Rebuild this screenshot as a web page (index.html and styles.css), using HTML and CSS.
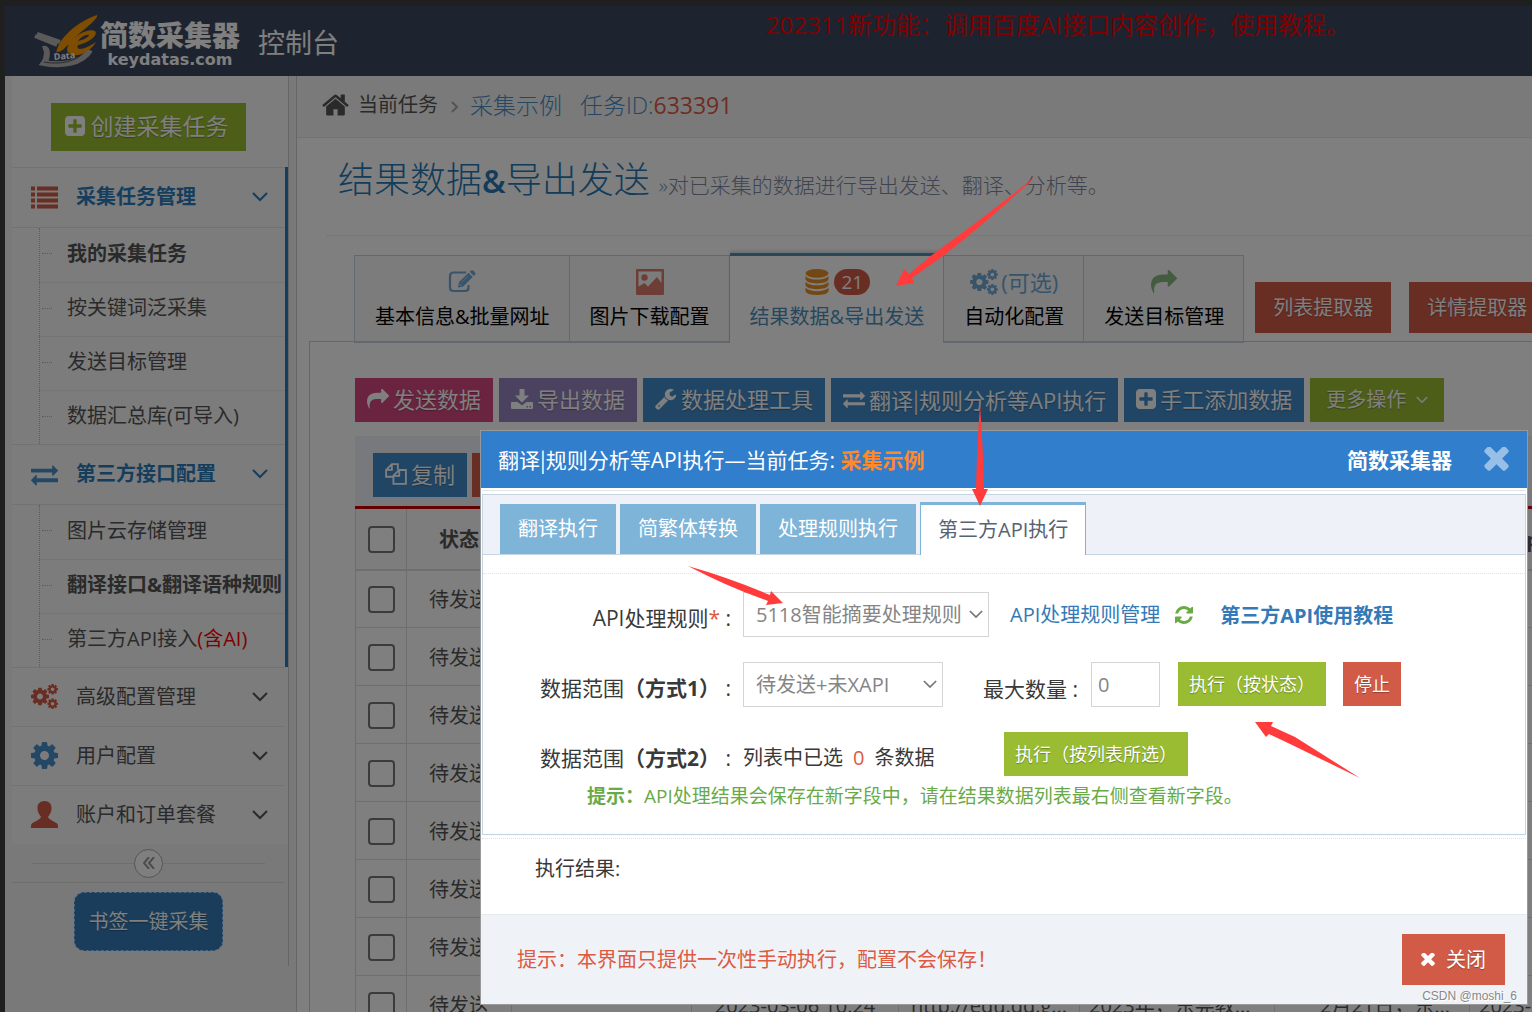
FILE: index.html
```html
<!DOCTYPE html>
<html lang="zh-CN">
<head>
<meta charset="utf-8">
<title>简数采集器 控制台</title>
<link rel="stylesheet" href="styles.css">
</head>
<body>
<svg class="sprite" aria-hidden="true">
  <symbol id="share" viewBox="0 0 1792 1792"><path d="M1792 640q0 26-19 45l-512 512q-19 19-45 19t-45-19-19-45v-256h-224q-98 0-175.500 6t-154 21.500-133 42.500-105.500 69.500-80 101-48.500 138.500-17.500 181q0 55 5 123 0 6 2.500 23.500t2.500 26.500q0 15-8.500 25t-23.500 10q-16 0-28-17-7-9-13-22t-13.500-30-10.500-24q-127-285-127-451 0-199 53-333 162-403 875-403h224v-256q0-26 19-45t45-19 45 19l512 512q19 19 19 45z"/></symbol>
  <symbol id="exchange" viewBox="0 0 1792 1792"><path d="M1792 1184v192q0 13-9.500 22.500t-22.500 9.500h-1376v192q0 13-9.500 22.500t-22.500 9.500q-12 0-24-10l-319-320q-9-9-9-22 0-14 9-23l320-320q9-9 23-9 13 0 22.500 9.500t9.500 22.500v192h1376q13 0 22.500 9.500t9.500 22.500zm0-544q0 14-9 23l-320 320q-9 9-23 9-13 0-22.500-9.500t-9.500-22.500v-192h-1376q-13 0-22.500-9.500t-9.500-22.500v-192q0-13 9.500-22.500t22.500-9.500h1376v-192q0-14 9-23t23-9q12 0 24 10l319 319q9 9 9 23z"/></symbol>
  <symbol id="cog" viewBox="128 128 1536 1536"><path d="M1152 896q0-106-75-181t-181-75-181 75-75 181 75 181 181 75 181-75 75-181zm512-109v222q0 12-8 23t-20 13l-185 28q-19 54-39 91 35 50 107 138 10 12 10 25t-9 23q-27 37-99 108t-94 71q-12 0-26-9l-138-108q-44 23-91 38-16 136-29 186-7 28-36 28h-222q-14 0-24.500-8.500t-11.500-21.500l-28-184q-49-16-90-37l-141 107q-10 9-25 9-14 0-25-11-126-114-165-168-7-10-7-23 0-12 8-23 15-21 51-66.500t54-70.500q-27-50-41-99l-183-27q-13-2-21-12.500t-8-23.500v-222q0-12 8-23t19-13l186-28q14-46 39-92-40-57-107-138-10-12-10-24 0-10 9-23 26-36 98.500-107.500t94.500-71.500q13 0 26 10l138 107q44-23 91-38 16-136 29-186 7-28 36-28h222q14 0 24.500 8.500t11.500 21.500l28 184q49 16 90 37l142-107q9-9 24-9 13 0 25 10 129 119 165 170 7 8 7 22 0 12-8 23-15 21-51 66.500t-54 70.500q26 50 41 98l183 28q13 2 21 12.500t8 23.500z"/></symbol>
  <symbol id="cogs" viewBox="0 0 30 28"><use href="#cog" x="0" y="4" width="20" height="20"/><use href="#cog" x="18" y="0" width="12" height="12"/><use href="#cog" x="18" y="16" width="12" height="12"/></symbol>
  <symbol id="times" viewBox="290 290 1212 1212"><path d="M1490 1190q0 40-28 68l-136 136q-28 28-68 28t-68-28l-294-294-294 294q-28 28-68 28t-68-28l-136-136q-28-28-28-68t28-68l294-294-294-294q-28-28-28-68t28-68l136-136q28-28 68-28t68 28l294 294 294-294q28-28 68-28t68 28l136 136q28 28 28 68t-28 68l-294 294 294 294q28 28 28 68z"/></symbol>
  <symbol id="home" viewBox="64 192 1664 1408"><path d="M1472 992v480q0 26-19 45t-45 19h-384v-384h-256v384h-384q-26 0-45-19t-19-45v-480q0-1 .5-3t.5-3l575-474 575 474q1 2 1 6zm223-69l-62 74q-8 9-21 11h-3q-13 0-21-7l-692-577-692 577q-12 8-24 7-13-2-21-11l-62-74q-8-10-7-23.500t11-21.500l719-599q32-26 76-26t76 26l244 204v-195q0-14 9-23t23-9h192q14 0 23 9t9 23v408l219 182q10 8 11 21.500t-7 23.500z"/></symbol>
  <symbol id="plus" viewBox="128 128 1536 1536"><path d="M1408 960v-128q0-26-19-45t-45-19h-320v-320q0-26-19-45t-45-19h-128q-26 0-45 19t-19 45v320h-320q-26 0-45 19t-19 45v128q0 26 19 45t45 19h320v320q0 26 19 45t45 19h128q26 0 45-19t19-45v-320h320q26 0 45-19t19-45zm256-544v960q0 119-84.500 203.500t-203.500 84.500h-960q-119 0-203.500-84.500t-84.500-203.500v-960q0-119 84.500-203.500t203.500-84.500h960q119 0 203.500 84.500t84.500 203.500z"/></symbol>
  <symbol id="refresh" viewBox="128 128 1536 1536"><path d="M1639 1056q0 5-1 7-64 268-268 434.500t-478 166.500q-146 0-282.500-55t-243.500-157l-129 129q-19 19-45 19t-45-19-19-45v-448q0-26 19-45t45-19h448q26 0 45 19t19 45-19 45l-137 137q71 66 161 102t187 36q134 0 250-65t186-179q11-17 53-117 8-23 30-23h192q13 0 22.500 9.500t9.500 22.500zm25-800v448q0 26-19 45t-45 19h-448q-26 0-45-19t-19-45 19-45l138-138q-148-137-349-137-134 0-250 65t-186 179q-11 17-53 117-8 23-30 23h-199q-13 0-22.500-9.500t-9.500-22.500v-7q65-268 270-434.500t480-166.500q146 0 284 55.500t245 156.500l130-129q19-19 45-19t45 19 19 45z"/></symbol>
  <symbol id="wrench" viewBox="64 64 1728 1728"><path d="M448 1472q0-26-19-45t-45-19-45 19-19 45 19 45 45 19 45-19 19-45zm644-420l-682 682q-37 37-90 37-52 0-91-37l-106-108q-38-36-38-90 0-53 38-91l681-681q39 98 114.500 173.500t173.500 114.500zm634-435q0 39-23 106-47 134-164.500 217.500t-258.500 83.500q-185 0-316.500-131.500t-131.500-316.500 131.500-316.500 316.500-131.500q58 0 121.500 16.500t107.500 46.500q16 11 16 28t-16 28l-293 169v224l193 107q5-3 79-48.500t135.500-81 70.500-35.500q15 0 23.500 10t8.500 25z"/></symbol>
  <symbol id="list" viewBox="0 0 27 22"><path d="M0 0h4v4H0zM0 6h4v4H0zM0 12h4v4H0zM0 18h4v4H0zM6 0h21v4H6zM6 6h21v4H6zM6 12h21v4H6zM6 18h21v4H6z"/></symbol>
  <symbol id="user" viewBox="0 0 27 27"><path d="M13.500 0C18 0 21 3 20.500 8c-.3 3-1.500 5.500-3.500 8 1 3 7 4.500 9.500 7 .5.700.5 2.500.5 4H0c0-1.500 0-3.300.5-4 2.500-2.500 8.500-4 9.500-7-2-2.500-3.200-5-3.500-8C6 3 9 0 13.500 0z"/></symbol>
  <symbol id="chev" viewBox="0 0 16 10"><path d="M1 1l7 7 7-7" fill="none" stroke="currentColor" stroke-width="2"/></symbol>
  <symbol id="edit" viewBox="0 0 28 24"><path d="M18 2.500H5.500Q2 2.500 2 6v11.500Q2 21 5.500 21H17q3.500 0 3.500-3.500V15" fill="none" stroke="currentColor" stroke-width="2.200"/><path d="M10 17.500l1-5.500L20.500 2.800l4.200 4.200-9.500 9.500zM21.700 1.700L23 .6q1.200-.9 2.400.2l1.600 1.700q1 1.200 0 2.300L25.900 6z"/><path d="M13 12.800l7-7M12 13.500v1.800h1.800" stroke="#bfcbd6" fill="none"/></symbol>
  <symbol id="image" viewBox="0 0 28 26"><path fill-rule="evenodd" d="M1 0h26q1 0 1 1v24q0 1-1 1H1q-1 0-1-1V1q0-1 1-1zm1.500 2.500v15l6-3.500 3.500 3.500L21 8l4.500 6V2.500z"/><circle cx="8.500" cy="8.500" r="3.200"/></symbol>
  <symbol id="database" viewBox="0 0 24 27"><ellipse cx="12" cy="4.500" rx="12" ry="4.500"/><path d="M0 7.500q4 3.500 12 3.500t12-3.500V11q-2 4-12 4T0 11zM0 13.500Q4 17 12 17t12-3.500V17q-2 4-12 4T0 17zM0 19.500Q4 23 12 23t12-3.500V23q-2 4-12 4T0 23z"/></symbol>
  <symbol id="download" viewBox="0 0 22 20"><path fill-rule="evenodd" d="M8.500 0h5v6.500H18l-7 7-7-7h4.500zM1 13h5.500l4.500 3.500 4.500-3.500H21q1 0 1 1v5q0 1-1 1H1q-1 0-1-1v-5q0-1 1-1zm14.500 4v1.500H17V17zm3 0v1.500H20V17z"/></symbol>
  <symbol id="copy" viewBox="0 0 24 24"><path d="M9 15H1.200V7.500L7.500 1.200H14V7M7.500 1.500v6H1.500M22.800 22.800H9.200v-9l6.200-6.200h7.400zM15.500 8v6H9.500" fill="none" stroke="currentColor" stroke-width="2"/></symbol>
</svg>

<div class="page">
  <header class="topbar">
    <a class="brand" href="#">
      <svg class="brand-mark" viewBox="0 0 64 54" aria-hidden="true">
        <path d="M3 20l23 8M1 22l22 9" stroke="#b5b5b5" stroke-width="4" fill="none"/>
        <path d="M9 35c6-2 4 10 1 14 16 3 38 1 46-13" stroke="#b5b5b5" stroke-width="6" fill="none"/>
        <path d="M10 48c15 3 34 0 42-12" stroke="#555" stroke-width="1" fill="none"/>
        <path fill="#ff9a00" d="M22 42C22 28 38 10 63 1c2 4-16 16-28 28 8-9 20-15 26-12 4 5-8 12-17 14-3 7 8 4 18-3-4 8-20 18-27 11-3-1-2-6 0-9-4 3-6 8-13 8zM44 27c5-1 11-4 11-6-3-1-9 3-11 6z"/>
        <text x="20" y="46" class="brand-data" transform="rotate(-5 20 46)">Data</text>
      </svg>
      <span class="brand-text"><strong>简数采集器</strong><small>keydatas.com</small></span>
    </a>
    <span class="console">控制台</span>
    <a class="notice" href="#">202311新功能：调用百度AI接口内容创作，使用教程。</a>
  </header>

  <div class="shell">
    <aside class="sidebar">
      <div class="create-wrap"><button class="create"><svg class="i20"><use href="#plus"/></svg>创建采集任务</button></div>
      <nav>
        <div class="open">
          <a class="item active" href="#"><svg class="mi red"><use href="#list"/></svg><span>采集任务管理</span><svg class="chev"><use href="#chev"/></svg></a>
          <ul class="sub">
            <li><a class="strong" href="#">我的采集任务</a></li>
            <li><a href="#">按关键词泛采集</a></li>
            <li><a href="#">发送目标管理</a></li>
            <li><a href="#">数据汇总库(可导入)</a></li>
          </ul>
          <a class="item active" href="#"><svg class="mi blue"><use href="#exchange"/></svg><span>第三方接口配置</span><svg class="chev"><use href="#chev"/></svg></a>
          <ul class="sub">
            <li><a href="#">图片云存储管理</a></li>
            <li><a class="strong" href="#">翻译接口&amp;翻译语种规则</a></li>
            <li><a href="#">第三方API接入<em>(含AI)</em></a></li>
          </ul>
        </div>
        <a class="item" href="#"><svg class="mi red"><use href="#cogs"/></svg><span>高级配置管理</span><svg class="chev"><use href="#chev"/></svg></a>
        <a class="item" href="#"><svg class="mi blue"><use href="#cog"/></svg><span>用户配置</span><svg class="chev"><use href="#chev"/></svg></a>
        <a class="item" href="#"><svg class="mi red"><use href="#user"/></svg><span>账户和订单套餐</span><svg class="chev"><use href="#chev"/></svg></a>
      </nav>
      <div class="collapse"><button aria-label="收起菜单"><svg viewBox="0 0 12 12"><path d="M6 0L1 6l5 6M11 0L6 6l5 6" fill="none" stroke="#999" stroke-width="2"/></svg></button></div>
      <div class="mark-wrap"><button class="bookmark">书签一键采集</button></div>
    </aside>

    <main class="content">
      <div class="crumbs"><svg class="home"><use href="#home"/></svg><span>当前任务</span><svg class="sep" viewBox="0 0 8 12"><path d="M1 1l5 5-5 5" fill="none" stroke="#a5a8b0" stroke-width="2"/></svg><a href="#">采集示例</a><a class="tid" href="#">任务ID:<b>633391</b></a></div>
      <div class="heading"><h1>结果数据<b>&amp;</b>导出发送</h1><p>»对已采集的数据进行导出发送、翻译、分析等。</p></div>
      <div class="tabs">
        <a href="#"><span class="tic lblue"><svg class="i28"><use href="#edit"/></svg></span>基本信息&amp;批量网址</a>
        <a href="#"><span class="tic lred"><svg class="i28"><use href="#image"/></svg></span>图片下载配置</a>
        <a class="on" href="#"><span class="tic orange"><svg class="i28"><use href="#database"/></svg><i>21</i></span>结果数据&amp;导出发送</a>
        <a href="#"><span class="tic lblue"><svg class="i28"><use href="#cogs"/></svg>(可选)</span>自动化配置</a>
        <a href="#"><span class="tic lgreen"><svg class="i28"><use href="#share"/></svg></span>发送目标管理</a>
        <button>列表提取器</button>
        <button>详情提取器</button>
      </div>
      <section class="pane">
        <div class="tools">
          <button class="pink"><svg><use href="#share"/></svg>发送数据</button>
          <button class="purple"><svg><use href="#download"/></svg>导出数据</button>
          <button><svg><use href="#wrench"/></svg>数据处理工具</button>
          <button><svg><use href="#exchange"/></svg><span>翻译<span class="bar">|</span>规则分析等API执行</span></button>
          <button><svg class="i20"><use href="#plus"/></svg>手工添加数据</button>
          <button class="more">更多操作<svg><use href="#chev"/></svg></button>
        </div>
        <div class="grid-head"><button><svg><use href="#copy"/></svg>复制</button><button class="del">删除</button></div>
        <table>
          <colgroup><col class="c1"><col class="c2"><col class="c3"><col class="c4"><col class="c5"><col class="c6"><col class="c6"><col class="c7"></colgroup>
          <thead><tr><th><input type="checkbox" aria-label="全选"></th><th>状态</th><th></th><th></th><th></th><th></th><th></th><th>p</th></tr></thead>
          <tbody>
            <tr><td><input type="checkbox" aria-label="选择第1行"></td><td>待发送</td><td></td><td></td><td></td><td></td><td></td><td></td></tr>
            <tr><td><input type="checkbox" aria-label="选择第2行"></td><td>待发送</td><td></td><td></td><td></td><td></td><td></td><td></td></tr>
            <tr><td><input type="checkbox" aria-label="选择第3行"></td><td>待发送</td><td></td><td></td><td></td><td></td><td></td><td></td></tr>
            <tr><td><input type="checkbox" aria-label="选择第4行"></td><td>待发送</td><td></td><td></td><td></td><td></td><td></td><td></td></tr>
            <tr><td><input type="checkbox" aria-label="选择第5行"></td><td>待发送</td><td></td><td></td><td></td><td></td><td></td><td></td></tr>
            <tr><td><input type="checkbox" aria-label="选择第6行"></td><td>待发送</td><td></td><td></td><td></td><td></td><td></td><td></td></tr>
            <tr><td><input type="checkbox" aria-label="选择第7行"></td><td>待发送</td><td></td><td></td><td></td><td></td><td></td><td></td></tr>
            <tr><td><input type="checkbox" aria-label="选择第8行"></td><td>待发送</td><td></td><td>2023-03-06 10:24</td><td>http://edu.qq.g...</td><td class="left">2023年，东莞教...</td><td class="date">2月21日，东...</td><td class="left">2023-03</td></tr>
          </tbody>
        </table>
      </section>
    </main>
  </div>
</div>

<div class="backdrop"></div>

<div class="modal" role="dialog" aria-labelledby="dlg-title">
  <div class="modal-head">
    <h2 id="dlg-title">翻译<span class="bar">|</span>规则分析等API执行—当前任务: <b>采集示例</b></h2>
    <strong>简数采集器</strong>
    <button aria-label="关闭窗口"><svg><use href="#times"/></svg></button>
  </div>
  <div class="modal-body">
    <div class="box">
      <div class="mtabs">
        <a href="#">翻译执行</a><a href="#">简繁体转换</a><a href="#">处理规则执行</a><a class="on" href="#">第三方API执行</a>
      </div>
      <form class="form" onsubmit="return false">
        <div class="row">
          <label for="rule">API处理规则<em>*</em> :</label>
          <span class="sel wide"><select id="rule"><option>5118智能摘要处理规则</option></select><svg><use href="#chev"/></svg></span>
          <a class="manage" href="#">API处理规则管理</a>
          <svg class="refresh"><use href="#refresh"/></svg>
          <a class="guide" href="#">第三方API使用教程</a>
        </div>
        <div class="row">
          <label for="scope">数据范围<b>（方式1）</b> :</label>
          <span class="sel"><select id="scope"><option>待发送+未XAPI</option></select><svg><use href="#chev"/></svg></span>
          <label class="max" for="max">最大数量 :</label>
          <input id="max" type="text" value="0">
          <button class="go">执行（按状态）</button>
          <button class="stop">停止</button>
        </div>
        <div class="row">
          <span class="lab">数据范围<b>（方式2）</b> :</span>
          <span class="picked">列表中已选<em>0</em>条数据</span>
          <button class="go">执行（按列表所选）</button>
        </div>
        <p class="hint"><b>提示：</b>API处理结果会保存在新字段中，请在结果数据列表最右侧查看新字段。</p>
      </form>
    </div>
    <div class="result">执行结果:</div>
  </div>
  <div class="modal-foot"><p>提示：本界面只提供一次性手动执行，配置不会保存！</p><button><svg><use href="#times"/></svg>关闭</button></div>
</div>

<svg class="arrows" width="1532" height="1012" viewBox="0 0 1532 1012" aria-hidden="true">
  <path d="M896 286l8-17 5 5 23-19Q985 217 1037 175 990 220 943 256l-31 22 2 5z"/>
  <path d="M980 506l-8-17h4q1-45 4-84 3 39 4 84h4z"/>
  <path d="M783 603l-17 2 2-4q-40-14-80-35 42 12 82 29l1-4z"/>
  <path d="M1255 722l18 0-2 4 24 11 65 41-72-35-19-9-3 3z"/>
</svg>
<div class="watermark">CSDN @moshi_6</div>
</body>
</html>
```
FILE: styles.css
```css
* { box-sizing: border-box; }
body { margin: 0; background: #3e3e3e; color: #555; font: 20px/30px "Open Sans", "Noto Sans CJK SC", sans-serif; overflow: hidden; }
a { color: inherit; text-decoration: none; }
button, input, select { font: inherit; border: 0; margin: 0; border-radius: 0; }
button { color: #fff; display: flex; align-items: center; justify-content: center; white-space: nowrap; flex-shrink: 0; padding: 0; text-shadow: 0 1px 1px rgba(0, 0, 0, .3); }
h1, h2, p, ul { margin: 0; padding: 0; font-weight: 400; }
em, i { font-style: normal; }
svg { fill: currentColor; flex-shrink: 0; }
.sprite { position: absolute; width: 0; height: 0; }
.i20 { width: 20px; height: 20px; }
.i28 { width: 28px; height: 26px; }
.bar { font-family: "Noto Sans CJK SC", sans-serif; }

.page { height: 100vh; overflow: hidden; padding: 6px 0 0 5px; }
.topbar { height: 70px; background: #3c495f; color: #fff; display: flex; align-items: center; white-space: nowrap; padding-left: 29px; }
.brand { display: flex; align-items: center; gap: 2px; }
.brand-mark { width: 64px; height: 54px; }
.brand-data { font: bold 9px "Open Sans", sans-serif; fill: #fff; }
.brand-text { display: flex; flex-direction: column; align-items: center; padding-top: 4px; }
.brand-text strong { font-size: 28px; line-height: 34px; font-weight: 900; }
.brand-text small { font: bold 16px/16px "DejaVu Sans", sans-serif; }
.console { font-size: 27px; padding: 4px 0 0 18px; }
.notice { color: #f00; font-size: 24px; margin: 0 182px 0 auto; align-self: flex-start; line-height: 38px; }

.shell { display: flex; align-items: flex-start; background: #f2f2f2; min-height: 100%; }
.sidebar { width: 284px; padding-left: 7px; border-right: 1px solid #ccc; background: #f2f2f2; flex-shrink: 0; height: 890px; }
.create-wrap { height: 91px; background: #fafafa; padding: 27px 0 0 39px; }
.create { width: 195px; height: 48px; background: #9abc32; font-size: 23px; gap: 6px; padding: 0 4px 2px 0; }
nav { background: #f8f8f8; }
.open { border-right: 3px solid #2b7dbc; }
.item { display: grid; grid-template-columns: 27px 1fr 16px; gap: 18px; align-items: center; height: 59px; padding: 0 17px 1px 19px; border-top: 1px solid #e5e5e5; margin-right: 3px; }
.open .item { margin-right: 0; height: 60px; }
.item.active { color: #2b7dbc; font-weight: 700; }
.mi { width: 27px; height: 27px; }
.chev { width: 16px; height: 10px; }
.red { color: #d15b47; }
.blue { color: #478fca; }
.sub { list-style: none; border-top: 1px solid #e5e5e5; }
.sub li { height: 54px; display: flex; align-items: center; margin-left: 27px; border-left: 1px dotted #9dbdd6; border-top: 1px dotted #ddd; white-space: nowrap; padding-bottom: 3px; }
.sub li:first-child { border-top: 0; }
.sub li::before { content: ""; width: 10px; margin: 0 15px 0 2px; border-top: 1px dotted #9dbdd6; }
.strong { font-weight: 700; }
.sub em { color: #f00; }
.collapse { height: 39px; display: flex; align-items: center; gap: 0; margin-right: 3px; padding: 0 20px; border-bottom: 1px solid #ddd; }
.collapse::before, .collapse::after { content: ""; flex: 1; border-top: 1px solid #ddd; }
.collapse button { width: 29px; height: 29px; border: 1px solid #aaa; border-radius: 50%; background: #fff; }
.collapse svg { width: 12px; height: 12px; }
.mark-wrap { display: flex; justify-content: center; padding-top: 9px; margin-right: 3px; }
.bookmark { width: 149px; height: 59px; background: #337ab7; border: 1px dashed #9cf; border-radius: 10px; }

.content { flex: 1; min-width: 0; margin-left: 7px; background: #fff; border-left: 1px solid #ccc; overflow: hidden; }
.crumbs { height: 62px; background: #f5f5f5; border-bottom: 1px solid #e5e5e5; display: flex; align-items: center; padding: 0 0 3px 25px; white-space: nowrap; }
.home { width: 27px; height: 24px; margin-right: 9px; }
.sep { width: 8px; height: 12px; margin: 4px 11px 0 13px; }
.crumbs a { color: #4a8fc7; font-size: 23px; font-weight: 300; }
.crumbs .tid { margin-left: 18px; }
.tid b { color: #dd5a43; font-weight: 400; }
.heading { height: 98px; margin-left: 30px; padding: 20px 0 0 11px; border-bottom: 1px dotted #e2e2e2; display: flex; align-items: baseline; gap: 9px; white-space: nowrap; }
h1 { color: #2679b5; font-size: 36px; line-height: 44px; font-weight: 300; }
h1 b { font-weight: 600; font-size: 32px; }
.heading p { color: #8089a0; font-size: 21px; font-weight: 300; }
.tabs { display: flex; margin: 17px 0 0 57px; align-items: flex-start; position: relative; white-space: nowrap; }
.tabs a { display: flex; flex-direction: column; align-items: center; padding: 13px 19px 0 20px; color: #000; background: #f9f9f9; border: 1px solid #c5d0dc; border-left-width: 0; border-bottom-width: 2px; margin-top: 2px; height: 88px; }
.tabs a:first-child { border-left-width: 1px; }
.tabs a.on { color: #4c8fbd; background: #fff; border-top: 3px solid #4c8fbd; border-bottom: 0; margin-top: 0; height: 90px; box-shadow: 0 -2px 3px rgba(0, 0, 0, .15); }
.tic { display: flex; align-items: center; gap: 3px; height: 26px; margin-bottom: 7px; font-size: 22px; }
.tic i { background: #d15b47; color: #fff; border-radius: 13px; font-size: 19px; line-height: 26px; width: 36px; text-align: center; }
.lblue { color: #6fa8d6; } .lred { color: #dd7d6c; } .orange { color: #e8902a; } .lgreen { color: #87b87f; }
.tabs button { width: 136px; height: 51px; background: #d15b47; margin: 29px 7px 0 11px; }
.pane { margin: -2px 0 0 12px; border: 1px solid #c5d0dc; border-right: 0; padding: 36px 0 0 45px; }
.tools { display: flex; gap: 6px; }
.tools button, .grid-head button { height: 44px; padding: 0 12px 2px; gap: 4px; font-size: 22px; background: #428bca; }
.tools svg, .grid-head svg { width: 22px; height: 22px; }
.tools .i20 { width: 20px; height: 20px; }
.tools .pink { background: #d6487e; }
.tools .purple { background: #9585bf; }
.tools .more { background: #9abc32; font-size: 20px; padding: 0 16px; gap: 10px; }
.tools .more svg { width: 12px; height: 8px; }
.grid-head { display: flex; gap: 5px; height: 70px; margin-top: 14px; padding: 17px 0 0 18px; background: #eff3f8; }
.grid-head .del { background: #d15b47; }
table { border-collapse: collapse; table-layout: fixed; width: 1240px; border-top: 3px solid #c00; }
.c1 { width: 51px; } .c2 { width: 105px; } .c3 { width: 180px; } .c4 { width: 207px; } .c5 { width: 181px; } .c6 { width: 195px; } .c7 { width: 126px; }
th, td { border: 1px solid #ddd; height: 58px; padding: 2px 0 0; text-align: center; white-space: nowrap; overflow: hidden; }
th { height: 62px; background: #fafafa; border-top: 0; border-bottom-width: 2px; }
.left { text-align: left; padding-left: 9px; }
.date { padding-left: 26px; }
td input, th input { appearance: none; display: block; margin: 0 auto; width: 27px; height: 27px; border: 2px solid #777; border-radius: 4px; background: #fff; }

.backdrop { position: fixed; inset: 0; background: rgba(0, 0, 0, .5); }

.modal { position: absolute; top: 430px; left: 480px; right: 4px; background: #fff; border: 1px solid #999; color: #393939; white-space: nowrap; }
.modal-head { height: 57px; background: #307ecc; color: #fff; display: flex; align-items: center; padding: 0 18px 0 17px; }
.modal-head h2 { flex: 1; font-size: 21px; }
.modal-head b { color: #ff892a; }
.modal-head strong { font-size: 21px; }
.modal-head button { background: none; margin-left: 32px; opacity: .5; }
.modal-head svg { width: 25px; height: 26px; }
.modal-body { padding: 2px 1px 0; }
.modal-body::before { content: ""; display: block; border-top: 1px solid #e5e5e5; margin-bottom: 3px; }
.box { border: 1px solid #c5d5e3; height: 341px; }
.mtabs { height: 60px; background: #eef1f7; border-bottom: 1px solid #c5d5e3; display: flex; align-items: flex-end; gap: 4px; padding-left: 17px; }
.mtabs a { height: 50px; padding: 0 18px; background: #7db4d8; color: #fff; line-height: 50px; }
.mtabs .on { background: #fff; color: #576373; border: 1px solid #7db4d8; border-top: 3px solid #7db4d8; border-bottom: 0; height: 53px; margin-bottom: -1px; padding: 0 17px; }
.form { margin-top: 18px; border-top: 1px dotted #e2e2e2; padding-top: 18px; }
.row { display: flex; height: 45px; margin-bottom: 25px; }
.row > label:first-child, .lab { width: 260px; padding: 11px 12px 0 0; text-align: right; font-size: 21px; flex-shrink: 0; }
.row em { color: #dd5a43; }
.sel { width: 200px; display: grid; align-items: center; }
.sel.wide { width: 246px; }
.sel select, .sel svg { grid-area: 1 / 1; }
.sel select { appearance: none; width: 100%; height: 45px; border: 1px solid #d5d5d5; background: #fff; color: #858585; padding: 0 12px; }
.sel svg { justify-self: end; width: 14px; height: 9px; margin-right: 6px; color: #777; pointer-events: none; }
.manage { color: #337ab7; padding-top: 8px; margin-left: 21px; }
.refresh { width: 18px; height: 18px; color: #69aa46; margin: 14px 27px 0 15px; }
.guide { color: #337ab7; font-weight: 700; padding-top: 9px; }
.max { font-size: 21px; padding-top: 12px; width: 148px; text-align: right; padding-right: 13px; }
.row input { width: 69px; border: 1px solid #d5d5d5; color: #858585; padding: 0 6px; margin-right: 18px; }
.go, .stop { height: 44px; font-size: 18px; padding: 0 11px; background: #9abc32; }
.stop { background: #d15b47; margin-left: 17px; }
.picked { width: 261px; padding-top: 11px; }
.picked em { margin: 0 10px; }
.hint { color: #69aa46; margin: -21px 0 0 104px; font-size: 19px; }
.result { border-top: 1px dotted #e2e2e2; margin-top: 3px; height: 76px; padding: 15px 0 0 53px; }
.modal-foot { height: 90px; background: #eff3f8; border-top: 1px solid #e4e9ee; display: flex; align-items: center; justify-content: space-between; padding: 0 22px 0 36px; }
.modal-foot p { color: #dd5a43; }
.modal-foot button { width: 103px; height: 51px; gap: 11px; background: #d15b47; }
.modal-foot svg { width: 14px; height: 14px; }
.arrows { position: absolute; top: 0; left: 0; fill: #ff3b3b; pointer-events: none; }
.watermark { position: absolute; right: 15px; bottom: 8px; font: 12px/16px "Liberation Sans", sans-serif; color: #888; text-shadow: 1px 1px 0 #fff; }
```
